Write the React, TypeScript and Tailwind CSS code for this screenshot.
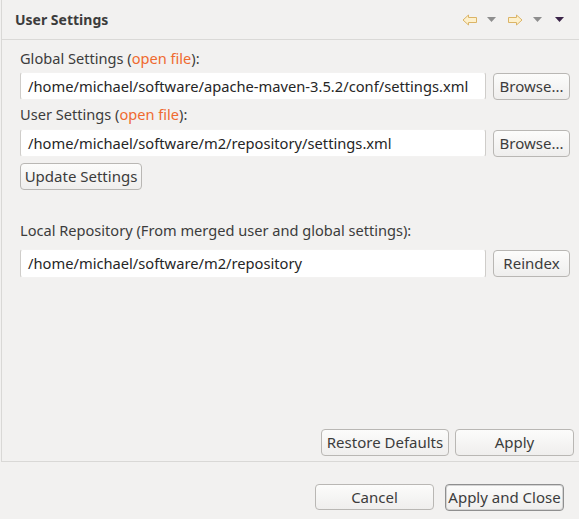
import React from 'react';

const font = { fontFamily: '"Noto Sans", "DejaVu Sans", sans-serif' };

const Btn: React.FC<{ label: string; className?: string; primary?: boolean }> = ({ label, className = '', primary }) => (
  <button
    className={`flex items-center justify-center rounded-[4px] border bg-gradient-to-b from-[#fcfcfb] to-[#efeeed] text-[15px] text-[#3c3c3c] ${
      primary ? 'border-[#8f8f8f] shadow-[inset_0_0_0_1px_#d4d4d4]' : 'border-[#b9b7b4]'
    } ${className}`}
  >
    {label}
  </button>
);

const PathField: React.FC<{ value: string; className?: string }> = ({ value, className = '' }) => (
  <div
    className={`flex items-center rounded-[3px] border-x border-y border-x-[#cfcdca] border-y-[#f3f2f1] bg-white pl-[7px] text-[14.7px] text-[#262626] ${className}`}
  >
    {value}
  </div>
);

const LeftArrow = () => (
  <svg width="16" height="12" viewBox="0 0 16 12">
    <path d="M1 6 L6.5 1 V3.5 H14.5 V8.5 H6.5 V11 Z" fill="#fdf0cc" stroke="#dbb466" strokeWidth="1" strokeLinejoin="round" />
  </svg>
);

const RightArrow = () => (
  <svg width="16" height="12" viewBox="0 0 16 12">
    <path d="M15 6 L9.5 1 V3.5 H1.5 V8.5 H9.5 V11 Z" fill="#fdf0cc" stroke="#dbb466" strokeWidth="1" strokeLinejoin="round" />
  </svg>
);

const Tri: React.FC<{ color: string }> = ({ color }) => (
  <svg width="9" height="6" viewBox="0 0 9 6">
    <path d="M0 0 H9 L4.5 5 Z" fill={color} />
  </svg>
);

export default function App() {
  return (
    <div className="flex h-[519px] w-[579px] flex-col overflow-hidden bg-[#f2f1f0]" style={font}>
      <div className="flex flex-1 flex-col pl-px">
        <div className="flex flex-1 flex-col border-b border-l border-[#d9d8d6]">
          <div className="flex h-[40px] items-center justify-between border-b border-[#dad9d7] pl-[13px] pr-[15px]">
            <span className="text-[14px] font-bold text-[#3c3c3c]">User Settings</span>
            <div className="flex items-center">
              <LeftArrow />
              <span className="ml-[9px]"><Tri color="#8e8e8e" /></span>
              <span className="ml-[11px]"><RightArrow /></span>
              <span className="ml-[10px]"><Tri color="#8e8e8e" /></span>
              <span className="ml-[13px]"><Tri color="#3b2448" /></span>
            </div>
          </div>

          <div className="flex flex-1 flex-col pl-[18px] pr-[9px] pt-[9px]">
            <div className="flex h-[20px] items-center text-[14.6px] text-[#3c3c3c]">
              Global Settings (<span className="text-[#ef6a2f]">open file</span>):
            </div>
            <div className="mt-[3px] flex items-center gap-[7px]">
              <PathField value="/home/michael/software/apache-maven-3.5.2/conf/settings.xml" className="h-[28px] flex-1" />
              <Btn label="Browse..." className="h-[27px] w-[77px]" />
            </div>
            <div className="mt-[5px] flex h-[20px] items-center text-[14.6px] text-[#3c3c3c]">
              User Settings (<span className="text-[#ef6a2f]">open file</span>):
            </div>
            <div className="mt-[4px] flex items-center gap-[7px]">
              <PathField value="/home/michael/software/m2/repository/settings.xml" className="h-[28px] flex-1" />
              <Btn label="Browse..." className="h-[27px] w-[77px]" />
            </div>
            <Btn label="Update Settings" className="mt-[6px] h-[27px] w-[122px]" />

            <div className="mt-[31px] flex h-[20px] items-center text-[14.6px] text-[#3c3c3c]">
              Local Repository (From merged user and global settings):
            </div>
            <div className="mt-[8px] flex items-center gap-[7px]">
              <PathField value="/home/michael/software/m2/repository" className="h-[29px] flex-1" />
              <Btn label="Reindex" className="h-[27px] w-[77px]" />
            </div>

            <div className="flex-1" />

            <div className="mb-[5px] mr-[-4px] flex justify-end gap-[6px]">
              <Btn label="Restore Defaults" className="h-[27px] w-[128px]" />
              <Btn label="Apply" className="h-[27px] w-[119px]" />
            </div>
          </div>
        </div>
      </div>

      <div className="flex h-[57px] items-end justify-end gap-[11px] pb-[8px] pr-[15px]">
        <Btn label="Cancel" className="mb-px h-[26px] w-[119px]" />
        <Btn label="Apply and Close" className="h-[27px] w-[119px]" primary />
      </div>
    </div>
  );
}
